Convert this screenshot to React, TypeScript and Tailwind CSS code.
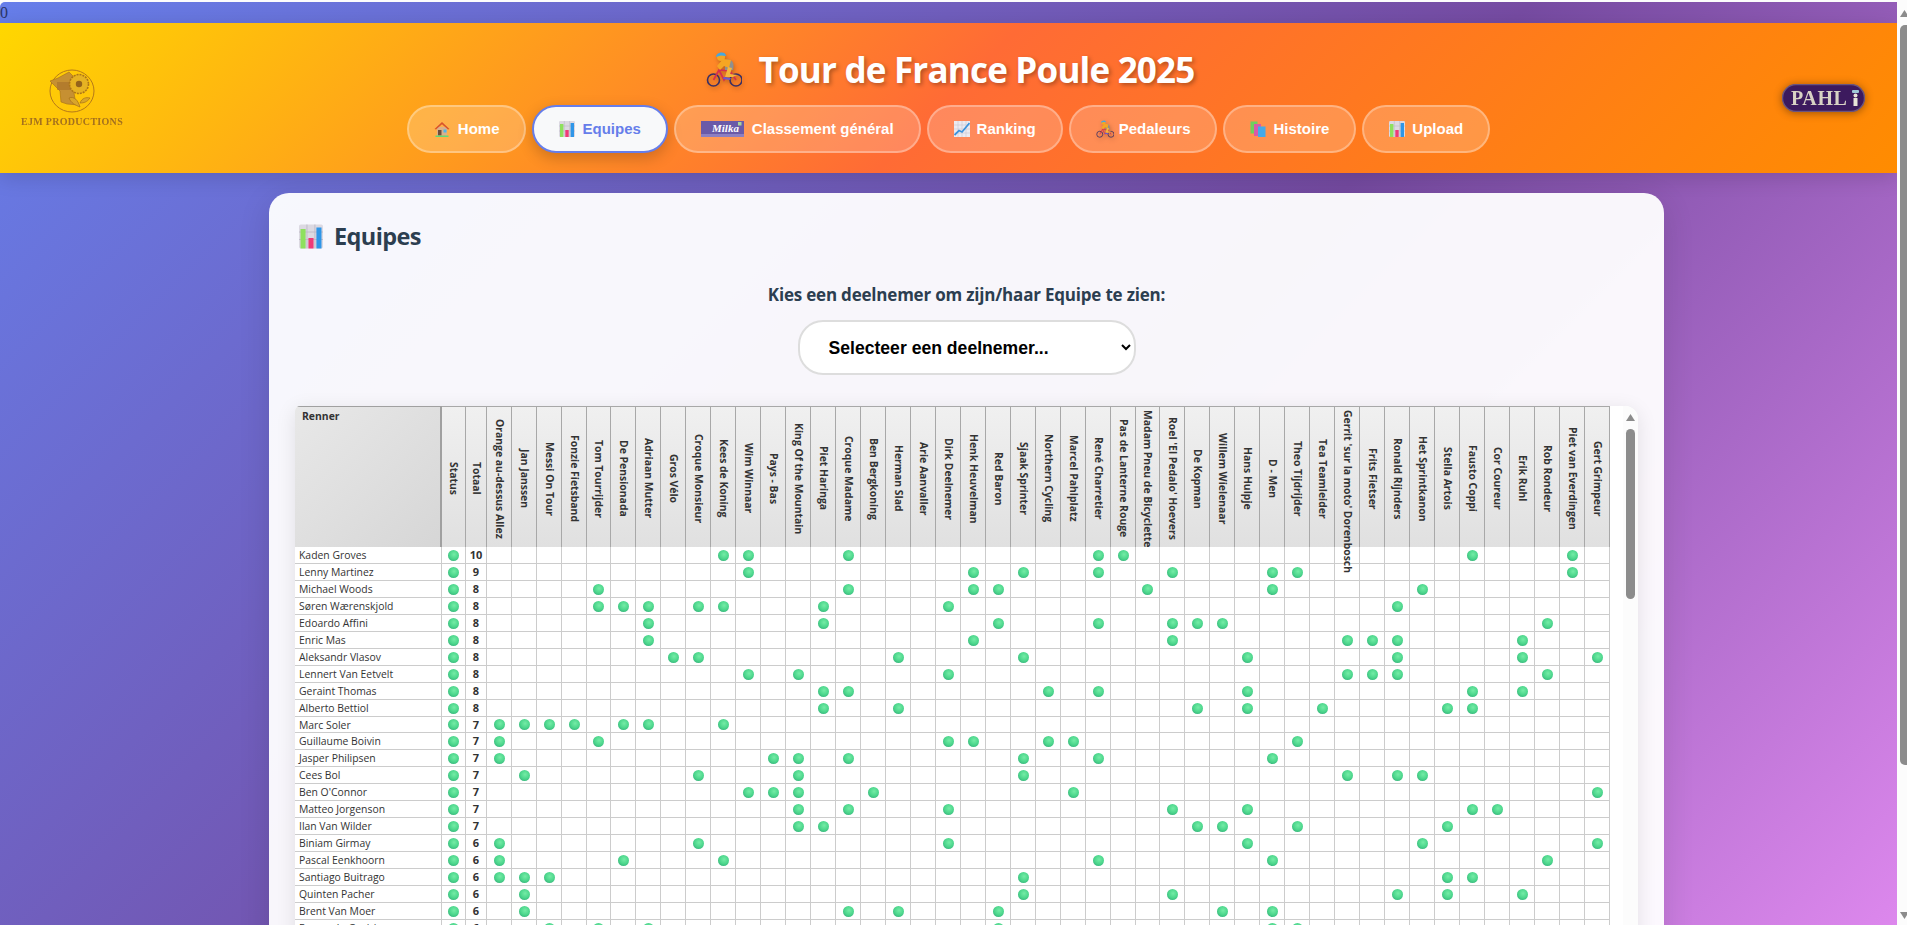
import React from "react";

const SEGOE = "font-['Open_Sans','Noto_Sans',sans-serif]";

const COLS = ["Orange au-dessus Allez","Jan Janssen","Messi On Tour","Fonzie Fietsband","Tom Tourrijder","De Pensionada","Adriaan Mutter","Gros Vélo","Croque Monsieur","Kees de Koning","Wim Winnaar","Pays - Bas","King Of the Mountain","Piet Haringa","Croque Madame","Ben Bergkoning","Herman Slad","Arie Aanvaller","Dirk Deelnemer","Henk Heuvelman","Red Baron","Sjaak Sprinter","Northern Cycling","Marcel Pahlplatz","René Charretier","Pas de Lanterne Rouge","Madam Pneu de Bicyclette","Roel 'El Pedalo' Hoevers","De Kopman","Willem Wielenaar","Hans Hulpje","D - Men","Theo Tijdrijder","Tea Teamleider","Gerrit 'sur la moto' Dorenbosch","Frits Fietser","Ronald Rijnders","Het Sprintkanon","Stella Artois","Fausto Coppi","Cor Coureur","Erik Ruhl","Rob Rondeur","Piet van Everdingen","Gert Grimpeur"];

const ROWS: [string, number, number[]][] = [
  ["Kaden Groves",10,[9,10,14,24,25,39,43]],
  ["Lenny Martinez",9,[10,19,21,24,27,31,32,43]],
  ["Michael Woods",8,[4,14,19,20,26,31,37]],
  ["Søren Wærenskjold",8,[4,5,6,8,9,13,18,36]],
  ["Edoardo Affini",8,[6,13,20,24,27,28,29,42]],
  ["Enric Mas",8,[6,19,27,34,35,36,41]],
  ["Aleksandr Vlasov",8,[7,8,16,21,30,36,41,44]],
  ["Lennert Van Eetvelt",8,[10,12,18,34,35,36,42]],
  ["Geraint Thomas",8,[13,14,22,24,30,39,41]],
  ["Alberto Bettiol",8,[13,16,28,30,33,38,39]],
  ["Marc Soler",7,[0,1,2,3,5,6,9]],
  ["Guillaume Boivin",7,[0,4,18,19,22,23,32]],
  ["Jasper Philipsen",7,[0,11,12,14,21,24,31]],
  ["Cees Bol",7,[1,8,12,21,34,36,37]],
  ["Ben O'Connor",7,[10,11,12,15,23,44]],
  ["Matteo Jorgenson",7,[12,14,18,27,30,39,40]],
  ["Ilan Van Wilder",7,[12,13,28,29,32,38]],
  ["Biniam Girmay",6,[0,8,18,30,37,44]],
  ["Pascal Eenkhoorn",6,[0,5,9,24,31,42]],
  ["Santiago Buitrago",6,[0,1,2,21,38,39]],
  ["Quinten Pacher",6,[1,21,27,36,38,41]],
  ["Brent Van Moer",6,[1,14,16,20,29,31]],
  ["Fernando Gaviria",6,[2,4,6,20,31,32]],
];

function Dot() {
  return <span className="block mx-auto w-[11px] h-[11px] rounded-full bg-[radial-gradient(circle_at_55%_40%,#74eca6_0%,#4cd68c_50%,#2a9f72_100%)]" />;
}

function HouseIcon({ s = 16 }: { s?: number }) {
  return (
    <svg width={s} height={s} viewBox="0 0 16 16" className="shrink-0">
      <rect x="3" y="6" width="10" height="8.5" fill="#d9b08c" />
      <path d="M8 1 L15.5 8 L14 8.6 L8 3.2 L2 8.6 L0.5 8 Z" fill="#d9532c" />
      <rect x="4" y="9" width="3.5" height="5.5" fill="#6d4c3d" />
      <rect x="9.5" y="8.5" width="3" height="3" fill="#4fb5e8" />
      <rect x="1.5" y="14.5" width="13" height="1.5" fill="#5fd97a" />
    </svg>
  );
}

function ChartIcon({ w = 16, h = 16 }: { w?: number; h?: number }) {
  return (
    <svg width={w} height={h} viewBox="0 0 16 16" className="shrink-0">
      <rect x="0" y="0" width="16" height="16" rx="1.2" fill="#dcd9e2" />
      <path d="M0 5H16M0 10H16M5.3 0V16M10.6 0V16" stroke="#bdbac6" strokeWidth="0.6" />
      <rect x="1" y="3" width="3.4" height="13" fill="#8ee05e" />
      <rect x="6.3" y="9" width="3.4" height="7" fill="#ef3a78" />
      <rect x="11.6" y="2" width="3.4" height="14" fill="#2f96e8" />
    </svg>
  );
}

function TrendIcon() {
  return (
    <svg width="16" height="16" viewBox="0 0 16 16" className="shrink-0">
      <rect width="16" height="16" fill="#eceaf0" />
      <path d="M0 4H16M0 8H16M0 12H16M4 0V16M8 0V16M12 0V16" stroke="#c9c6d2" strokeWidth="0.6" />
      <path d="M0.5 14 L5 9.5 L8 11 L15.5 2" fill="none" stroke="#3c93dc" strokeWidth="1.8" />
    </svg>
  );
}

function BooksIcon() {
  return (
    <svg width="16" height="16" viewBox="0 0 16 16" className="shrink-0">
      <rect x="0.5" y="0.5" width="7" height="12" fill="#6fcf5e" />
      <rect x="4" y="3" width="7" height="12" fill="#d85aa8" />
      <rect x="8" y="5.5" width="7.5" height="10.5" fill="#45a9e8" />
    </svg>
  );
}

function Cyclist({ w, h }: { w: number; h: number }) {
  return (
    <svg width={w} height={h} viewBox="0 0 36 35" className="shrink-0 drop-shadow-[1px_2px_2px_rgba(0,0,0,0.25)]">
      <circle cx="7.5" cy="28" r="6" fill="none" stroke="#3b2f63" strokeWidth="1.6" />
      <circle cx="30" cy="28" r="6" fill="none" stroke="#3b2f63" strokeWidth="1.6" />
      <path d="M7.5 28 L13 18 L24 19 L30 28 M13 18 L18 28 L24 19" fill="none" stroke="#d5304f" strokeWidth="1.7" />
      <path d="M19 8 C25 6 29 10 27 18 L19 18 Z" fill="#8f8f8f" />
      <path d="M11 14 L17 7 L25 8 L23 16 L18 14 L14 18 Z" fill="#f5a623" />
      <path d="M22 15 L19 25 L27 25 L31 23 L24 22 L26 16 Z" fill="#f6b53c" />
      <path d="M18 25 L25 26 L24 28 L17 27 Z" fill="#6a5acd" />
      <circle cx="15" cy="5" r="4" fill="#f5a623" />
      <path d="M10 5 C10.5 -0.5 20 -1 20 4 L15 3.5 Z" fill="#46a7e0" />
    </svg>
  );
}

function MilkaBar() {
  return (
    <svg width="43" height="16" viewBox="0 0 43 16" className="shrink-0">
      <rect width="43" height="16" fill="#6a5aa8" />
      <rect y="13" width="43" height="3" fill="#8c7fc2" />
      <rect x="37" y="1" width="3.5" height="3.5" fill="#a9d59a" />
      <text x="11" y="11" fontFamily="'Liberation Serif',serif" fontStyle="italic" fontSize="11" fill="#ffffff">Milka</text>
    </svg>
  );
}

function EjmLogo() {
  return (
    <div className="flex flex-col items-center w-[102px] blur-[0.4px]">
      <svg width="46" height="44" viewBox="0 0 46 44">
        <ellipse cx="23" cy="22" rx="22" ry="21" fill="none" stroke="#b5791a" strokeWidth="1" />
        <path d="M1 12 L9 9 L20 3 L25 8 L24 18 L26 30 L30 36 L18 35 L12 33 L11 22 L5 16 Z" fill="#c69032" stroke="#a46e1a" strokeWidth="0.6" />
        <rect x="8" y="13" width="14" height="8" fill="#a76f2a" opacity="0.6" />
        <circle cx="30" cy="15" r="9.5" fill="#e6b323" stroke="#ad7518" strokeWidth="1.6" strokeDasharray="2 1" />
        <circle cx="30" cy="15" r="3.2" fill="#94631a" />
        <path d="M20 29 C25 27 29 31 31 38 C26 36 22 34 20 29 Z M31 34 C33 29 37 28 41 29 C38 33 35 34 31 34 Z" fill="#d9a62a" stroke="#a46e1a" strokeWidth="0.7" />
      </svg>
      <span className="mt-[3px] font-['Liberation_Serif',serif] font-bold text-[10px] leading-[12px] tracking-[0.3px] whitespace-nowrap text-[#a4701e]">EJM PRODUCTIONS</span>
    </div>
  );
}

function PahlLogo() {
  return (
    <svg width="83" height="28" viewBox="0 0 83 28" className="drop-shadow-[0_1px_4px_rgba(0,0,0,0.4)]">
      <rect x="0.5" y="0.5" width="82" height="27" rx="13.5" fill="#3c1a5e" stroke="#6a5580" strokeWidth="1.4" />
      <text x="9" y="21" fontFamily="'Liberation Serif',serif" fontWeight="700" fontSize="20" letterSpacing="0.6" fill="#d8d2c4">PAHL</text>
      <rect x="70" y="6" width="7" height="3" rx="1" fill="#9fc8d8" />
      <circle cx="73.5" cy="11.5" r="2" fill="#e8e4d8" />
      <rect x="71.5" y="14" width="4" height="8" fill="#e8e4d8" />
    </svg>
  );
}

function Pill({ active, icon, label, gap = "gap-[7px]" }: { active?: boolean; icon: React.ReactNode; label: string; gap?: string }) {
  return (
    <div className={`flex items-center ${gap} h-12 px-[25px] rounded-[25px] border-2 font-['Liberation_Sans',sans-serif] font-bold text-[15px] whitespace-nowrap ${active ? "bg-[#f8f9fa] border-[#667eea] text-[#667eea] shadow-[0_5px_15px_rgba(0,0,0,0.2)]" : "bg-white/20 border-white/30 text-white"}`}>
      {icon}
      <span>{label}</span>
    </div>
  );
}

function Arrow({ up, className }: { up?: boolean; className?: string }) {
  return (
    <svg width="9" height="7" viewBox="0 0 9 7" className={className}>
      <path d={up ? "M4.5 0 L9 7 L0 7 Z" : "M0 0 L9 0 L4.5 7 Z"} fill="#8c8c8c" />
    </svg>
  );
}

function VText({ children }: { children: React.ReactNode }) {
  return (
    <div className="h-[140px] flex flex-col items-center justify-center-safe pt-[3px] relative z-10">
      <span className="[writing-mode:vertical-rl] whitespace-nowrap">{children}</span>
    </div>
  );
}

function thW(i: number) {
  return i === 4 || i === 26 ? "w-[24px]" : "w-[25px]";
}

function RiderTable() {
  const th = "p-0 font-bold border-r border-t border-[#a8a8a8] bg-[linear-gradient(180deg,#f0f0f0,#e0e0e0)] align-top";
  const td = "p-0 border-r border-b border-[#cccccc] align-middle leading-[14px]";
  return (
    <table className={`table-fixed w-[1315px] border-separate border-spacing-0 ${SEGOE} text-[10.4px] text-[#333333]`}>
      <colgroup>
        <col className="w-[147px]" />
        <col className="w-[24px]" />
        <col className="w-[21px]" />
        {COLS.map((c, i) => <col key={c} className={thW(i)} />)}
      </colgroup>
      <thead>
        <tr>
          <th className="p-0 pl-[7px] pt-[2px] font-bold text-left align-top border-r-2 border-t border-[#a0a0a0] bg-[linear-gradient(135deg,#e8e8e8,#d6d6d6)]">Renner</th>
          <th className={th}><VText>Status</VText></th>
          <th className={th}><VText>Totaal</VText></th>
          {COLS.map((c) => <th key={c} className={th}><VText>{c}</VText></th>)}
        </tr>
      </thead>
      <tbody>
        {ROWS.map(([name, total, dots], r) => (
          <tr key={name} className={r === 10 ? "h-[16px]" : "h-[17px]"}>
            <td className={`${td} pl-[4px] whitespace-nowrap overflow-hidden`}>{name}</td>
            <td className={td}><Dot /></td>
            <td className={`${td} text-center font-bold text-[11px]`}>{total}</td>
            {COLS.map((c, i) => <td key={c} className={td}>{dots.includes(i) ? <Dot /> : null}</td>)}
          </tr>
        ))}
      </tbody>
    </table>
  );
}

export default function App() {
  return (
    <div className="flex h-screen overflow-hidden bg-[#fcfcfc] pt-[2px]">
      <main className="flex-1 min-w-0 overflow-y-auto [scrollbar-width:none] rounded-tl-[5px]">
        <div className="min-h-[1168px] bg-[linear-gradient(135deg,#667eea_0%,#764ba2_50%,#f093fb_100%)]">
          <div className="h-[21px] font-['Liberation_Serif',serif] text-[16px] leading-[21px] text-[#2a3566]">0</div>

          <header className="h-[150px] grid grid-cols-[1fr_auto_1fr] items-center bg-[linear-gradient(135deg,#ffd700_0%,#ff6b35_50%,#ff8c00_100%)] shadow-[0_4px_20px_rgba(0,0,0,0.15)]">
            <div className="justify-self-start ml-[21px]"><EjmLogo /></div>
            <div className="self-start flex flex-col items-center pt-[23px]">
              <div className="flex items-center h-[47px] gap-[16px] ml-[4px]">
                <Cyclist w={36} h={35} />
                <h1 className={`${SEGOE} font-bold text-[35px] leading-[47px] tracking-[-0.8px] text-white [text-shadow:2px_2px_4px_rgba(0,0,0,0.3)] whitespace-nowrap`}>Tour de France Poule 2025</h1>
              </div>
              <nav className="mt-[12px] flex gap-[6px]">
                <Pill icon={<HouseIcon />} label="Home" gap="gap-[8px]" />
                <Pill active icon={<ChartIcon />} label="Equipes" />
                <Pill icon={<MilkaBar />} label="Classement général" gap="gap-[8px]" />
                <Pill icon={<TrendIcon />} label="Ranking" />
                <Pill icon={<Cyclist w={18} h={18} />} label="Pedaleurs" gap="gap-[5px]" />
                <Pill icon={<BooksIcon />} label="Histoire" />
                <Pill icon={<ChartIcon />} label="Upload" />
              </nav>
            </div>
            <div className="justify-self-end mr-[32px]"><PahlLogo /></div>
          </header>

          <section className="ml-[269px] mt-[20px] w-[1395px] h-[942px] px-[26px] pt-[31px] rounded-[20px] bg-white/95 shadow-[0_8px_32px_rgba(0,0,0,0.12)]">
            <h2 className={`flex items-center gap-[11px] ml-[4px] h-[25px] ${SEGOE} font-bold text-[23.5px] tracking-[-0.6px] text-[#2c3e50]`}>
              <ChartIcon w={24} h={25} />
              <span>Equipes</span>
            </h2>
            <div className="mt-[35px] flex flex-col items-center">
              <label className={`${SEGOE} font-bold text-[17px] leading-[22px] tracking-[-0.2px] text-[#2c3e50]`}>Kies een deelnemer om zijn/haar Equipe te zien:</label>
              <select className="mt-[14px] w-[338px] h-[55px] pl-[25px] pr-[5px] border-2 border-[#dddddd] rounded-[25px] bg-white font-['Liberation_Sans',sans-serif] font-bold text-[17.6px] text-black">
                <option>Selecteer een deelnemer...</option>
              </select>
            </div>
            <div className="mt-[31px] flex h-[700px] overflow-hidden rounded-tl-[5px] rounded-tr-[13px] bg-white shadow-[0_4px_20px_rgba(0,0,0,0.1)]">
              <div className="flex-1 min-w-0 overflow-hidden">
                <RiderTable />
              </div>
              <div className="w-[15px] bg-[#fcfcfc] flex flex-col items-center">
                <Arrow up className="mt-[8px]" />
                <div className="mt-[8px] w-[9px] h-[170px] rounded-[5px] bg-[#8c8c8c]" />
              </div>
            </div>
          </section>
        </div>
      </main>
      <aside className="w-[10px] shrink-0 bg-[#fcfcfc] pl-[3px] overflow-hidden flex flex-col">
        <Arrow up className="mt-[8px] shrink-0" />
        <div className="mt-[8px] w-[11px] h-[740px] shrink-0 rounded-[5px] bg-[#8c8c8c]" />
        <Arrow className="mt-[147px] shrink-0" />
      </aside>
    </div>
  );
}
